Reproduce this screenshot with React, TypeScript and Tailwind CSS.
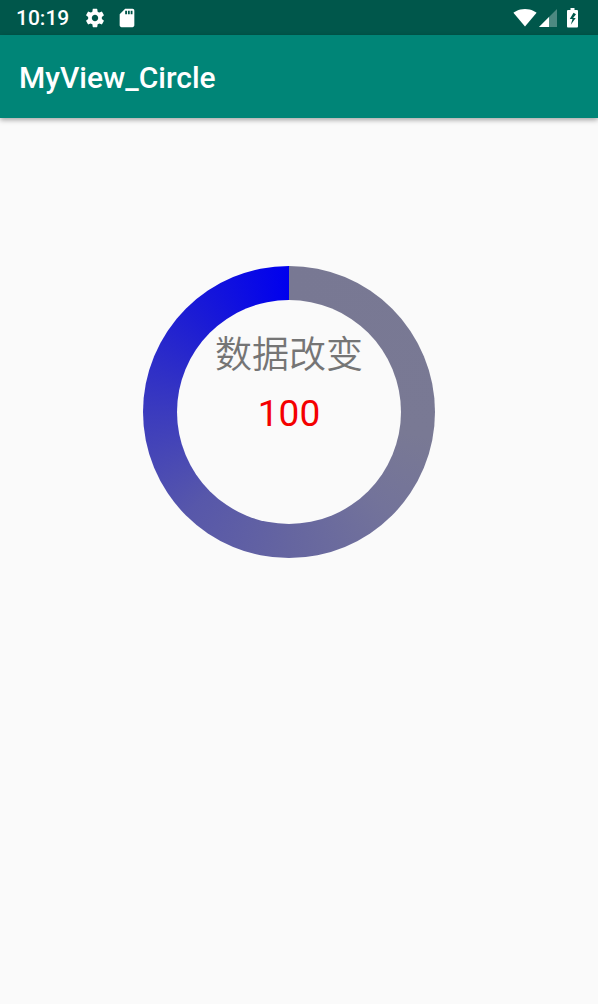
import React from "react";

function SettingsIcon() {
  return (
    <svg viewBox="0 0 24 24" className="h-[22px] w-[22px]" fill="#fff" aria-hidden="true">
      <path d="M19.43 12.98c.04-.32.07-.64.07-.98s-.03-.66-.07-.98l2.11-1.65c.19-.15.24-.42.12-.64l-2-3.46c-.12-.22-.39-.3-.61-.22l-2.49 1c-.52-.4-1.08-.73-1.69-.98l-.38-2.65A.488.488 0 0 0 14 2h-4c-.25 0-.46.18-.49.42l-.38 2.65c-.61.25-1.17.59-1.69.98l-2.49-1c-.23-.09-.49 0-.61.22l-2 3.46c-.13.22-.07.49.12.64l2.11 1.65c-.04.32-.07.65-.07.98s.03.66.07.98l-2.11 1.65c-.19.15-.24.42-.12.64l2 3.46c.12.22.39.3.61.22l2.49-1c.52.4 1.08.73 1.69.98l.38 2.65c.03.24.24.42.49.42h4c.25 0 .46-.18.49-.42l.38-2.65c.61-.25 1.17-.59 1.69-.98l2.49 1c.23.09.49 0 .61-.22l2-3.46c.12-.22.07-.49-.12-.64l-2.11-1.65zM12 15.5c-1.93 0-3.5-1.57-3.5-3.5s1.57-3.5 3.5-3.5 3.5 1.57 3.5 3.5-1.57 3.5-3.5 3.5z" />
    </svg>
  );
}

function SdCardIcon() {
  return (
    <svg viewBox="0 0 24 24" className="h-[22px] w-[22px]" fill="#fff" aria-hidden="true">
      <path d="M18 2h-8L4.020 8 4 20c0 1.100.9 2 2 2h12c1.100 0 2-.9 2-2V4c0-1.100-.9-2-2-2zm-6 6h-2V4h2v4zm3 0h-2V4h2v4zm3 0h-2V4h2v4z" />
    </svg>
  );
}

function WifiIcon() {
  return (
    <svg viewBox="0 0 24 18" className="h-[18px] w-6" fill="#fff" aria-hidden="true">
      <path d="M12 17.600L23.600 3.800C23 3.300 18.800 0 12 0S1 3.300.4 3.800L12 17.600z" />
    </svg>
  );
}

function SignalIcon() {
  return (
    <svg viewBox="0 0 18 18" className="h-[18px] w-[18px]" fill="#fff" aria-hidden="true">
      <path d="M0 18L18 0v18z" fillOpacity=".3" />
      <path d="M0 18L10 8v10z" />
    </svg>
  );
}

function BatteryIcon() {
  return (
    <svg viewBox="0 0 12 20" className="h-5 w-3" fill="#fff" fillRule="evenodd" aria-hidden="true">
      <path d="M3.500 0h4v2h2.300c.7 0 1.200.5 1.200 1.200v15c0 .7-.5 1.300-1.200 1.300H1.200C.5 19.500 0 18.900 0 18.200v-15C0 2.500.5 2 1.200 2h2.300zM6.500 4.800L2.800 11h2.700l-1.700 5.800 4.900-6.900H6.100L9 6.200z" />
    </svg>
  );
}

export default function App() {
  return (
    <div className="min-h-screen bg-[#fafafa] font-[Roboto,'Noto_Sans_CJK_SC',sans-serif]">
      <div className="flex h-[35px] items-center justify-between bg-[#00574b] pl-4 pr-[19px] text-white">
        <div className="flex items-center">
          <span className="text-[21px] font-medium leading-6">10:19</span>
          <div className="ml-[15px] flex items-center gap-2.5">
            <SettingsIcon />
            <SdCardIcon />
          </div>
        </div>
        <div className="flex items-center">
          <WifiIcon />
          <div className="ml-0.5 mr-2.5">
            <SignalIcon />
          </div>
          <BatteryIcon />
        </div>
      </div>
      <header className="flex h-[83px] items-center bg-[#008577] px-[19px] pt-0.5 shadow-[0_2px_5px_rgba(0,0,0,0.35)]">
        <h1 className="text-[30px] font-medium leading-9 text-white">MyView_Circle</h1>
      </header>
      <main className="flex justify-center pr-5 pt-[148px]">
        <div className="rounded-full bg-[conic-gradient(#787893_0deg,#797994_100deg,#73739a_135deg,#6565a0_180deg,#5757aa_225deg,#3b3bbe_270deg,#1c1cd4_315deg,#0000ee_360deg)] p-[34px]">
          <div className="flex size-56 flex-col items-center rounded-full bg-[#fafafa] pt-[34px] text-center">
            <p className="text-[37px] font-[350] leading-[44px] text-[#757575]">数据改变</p>
            <p className="mt-3.5 text-[37px] leading-[44px] text-[#f40000]">100</p>
          </div>
        </div>
      </main>
    </div>
  );
}
